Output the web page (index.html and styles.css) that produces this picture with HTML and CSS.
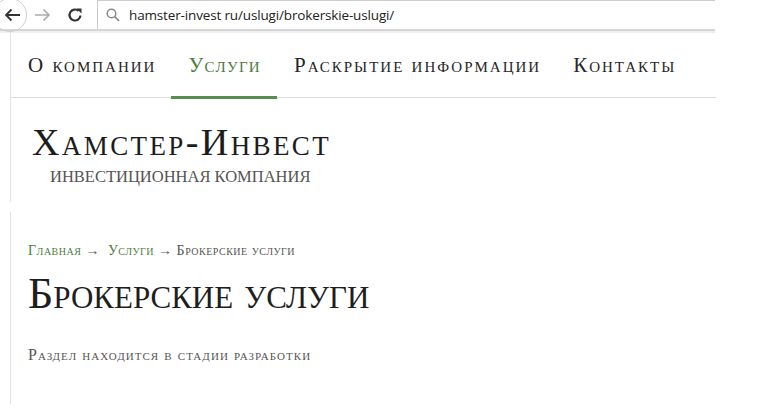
FILE: index.html
```html
<!DOCTYPE html>
<html lang="ru">
<head>
<meta charset="utf-8">
<title>Брокерские услуги</title>
<link rel="stylesheet" href="styles.css">
</head>
<body>
<div class="toolbar">
  <div class="nav-btns">
    <span class="btn back">
      <svg width="20" height="20" viewBox="0 0 20 20"><path d="M18 10H4M9.5 4.5L4 10l5.5 5.5" fill="none" stroke="#333" stroke-width="1.8"/></svg>
    </span>
    <span class="btn fwd">
      <svg width="18" height="18" viewBox="0 0 18 18"><path d="M1 9h14M9.5 3.5L15 9l-5.5 5.5" fill="none" stroke="#aaa" stroke-width="1.6"/></svg>
    </span>
    <span class="btn reload">
      <svg width="18" height="18" viewBox="0 0 18 18"><path d="M14.5 9.5a5.5 5.5 0 1 1-1.8-4.6" fill="none" stroke="#333" stroke-width="2.2"/><path d="M10.5 2.5h5v5z" fill="#333"/></svg>
    </span>
  </div>
  <div class="address">
    <svg class="search" width="14" height="14" viewBox="0 0 14 14"><circle cx="5.5" cy="5.5" r="4.3" fill="none" stroke="#888" stroke-width="1.5"/><path d="M8.7 8.7l4.3 4.3" stroke="#888" stroke-width="1.7"/></svg>
    <span class="url">hamster-invest ru/uslugi/brokerskie-uslugi/</span>
  </div>
</div>
<div class="page">
  <nav class="menu">
    <a class="item">О компании</a>
    <a class="item active">Услуги</a>
    <a class="item">Раскрытие информации</a>
    <a class="item">Контакты</a>
  </nav>
  <header class="brand">
    <div class="logo">Хамстер-Инвест</div>
    <div class="tagline">инвестиционная компания</div>
  </header>
  <main class="content">
    <div class="crumbs"><a class="crumb">Главная</a> → &nbsp;<a class="crumb">Услуги</a> → Брокерские услуги</div>
    <h1 class="title">Брокерские услуги</h1>
    <p class="text">Раздел находится в стадии разработки</p>
  </main>
</div>
</body>
</html>
```
FILE: styles.css
```css
html, body {
  margin: 0;
  padding: 0;
  background: #fff;
}
body {
  width: 770px;
  height: 411px;
  overflow: hidden;
  font-family: "Liberation Serif", "DejaVu Serif", serif;
  color: #222;
}
.toolbar {
  display: flex;
  align-items: center;
  height: 29px;
  width: 715px;
  border-bottom: 2px solid #d6d6d6;
  box-shadow: 0 2px 0 #efefef;
}
.nav-btns {
  display: flex;
  align-items: center;
  width: 97px;
  height: 29px;
}
.btn {
  display: flex;
  align-items: center;
  justify-content: center;
}
.back {
  width: 34px;
  height: 34px;
  margin-left: -7px;
  border: 1px solid #cfcfcf;
  border-radius: 50%;
  box-sizing: border-box;
  padding-left: 4px;
}
.fwd {
  margin-left: 7px;
}
.reload {
  margin-left: 14px;
}
.address {
  flex: 1;
  display: flex;
  align-items: center;
  height: 29px;
  box-sizing: border-box;
  border: 1px solid #cccccc;
  border-bottom: none;
  border-right: none;
  padding-left: 8px;
}
.search {
  margin-right: 9px;
}
.url {
  font-family: "Open Sans", "DejaVu Sans", sans-serif;
  font-size: 13.5px;
  color: #222;
  letter-spacing: -0.15px;
}
.page {
  margin-left: 10px;
  width: 706px;
}
.menu {
  display: flex;
  height: 66px;
  border-left: 1px solid #e4e4e4;
  border-bottom: 1px solid #dcdcdc;
}
.item {
  display: flex;
  align-items: center;
  padding: 4px 15px 0 17px;
  font-size: 21px;
  font-variant: small-caps;
  letter-spacing: 2px;
  color: #262626;
  border-bottom: 3px solid transparent;
  margin-bottom: -2px;
}
.item.active {
  color: #4c7c3e;
  letter-spacing: 1.3px;
  padding-right: 16px;
  border-bottom-color: #5b8c4f;
}
.brand {
  padding: 24px 0 15px 21px;
  border-left: 1px solid #e4e4e4;
}
.logo {
  font-size: 38px;
  font-variant: small-caps;
  letter-spacing: 2.4px;
  line-height: 40px;
  color: #1c1c1c;
}
.tagline {
  margin: 5px 0 0 18px;
  font-size: 16.5px;
  text-transform: uppercase;
  color: #555;
  line-height: 20px;
}
.content {
  margin-top: 10px;
  padding: 30px 0 40px 17px;
  border-left: 1px solid #e4e4e4;
}
.crumbs {
  font-size: 14px;
  font-variant: small-caps;
  letter-spacing: 0.5px;
  color: #555;
  line-height: 18px;
}
.crumb {
  color: #4c7c3e;
}
.title {
  margin: 9px 0 0;
  font-size: 44px;
  font-weight: normal;
  font-variant: small-caps;
  line-height: 50px;
  color: #1e1e1e;
}
.text {
  margin: 27px 0 0;
  font-size: 16px;
  font-variant: small-caps;
  letter-spacing: 1.05px;
  color: #555;
}
```
